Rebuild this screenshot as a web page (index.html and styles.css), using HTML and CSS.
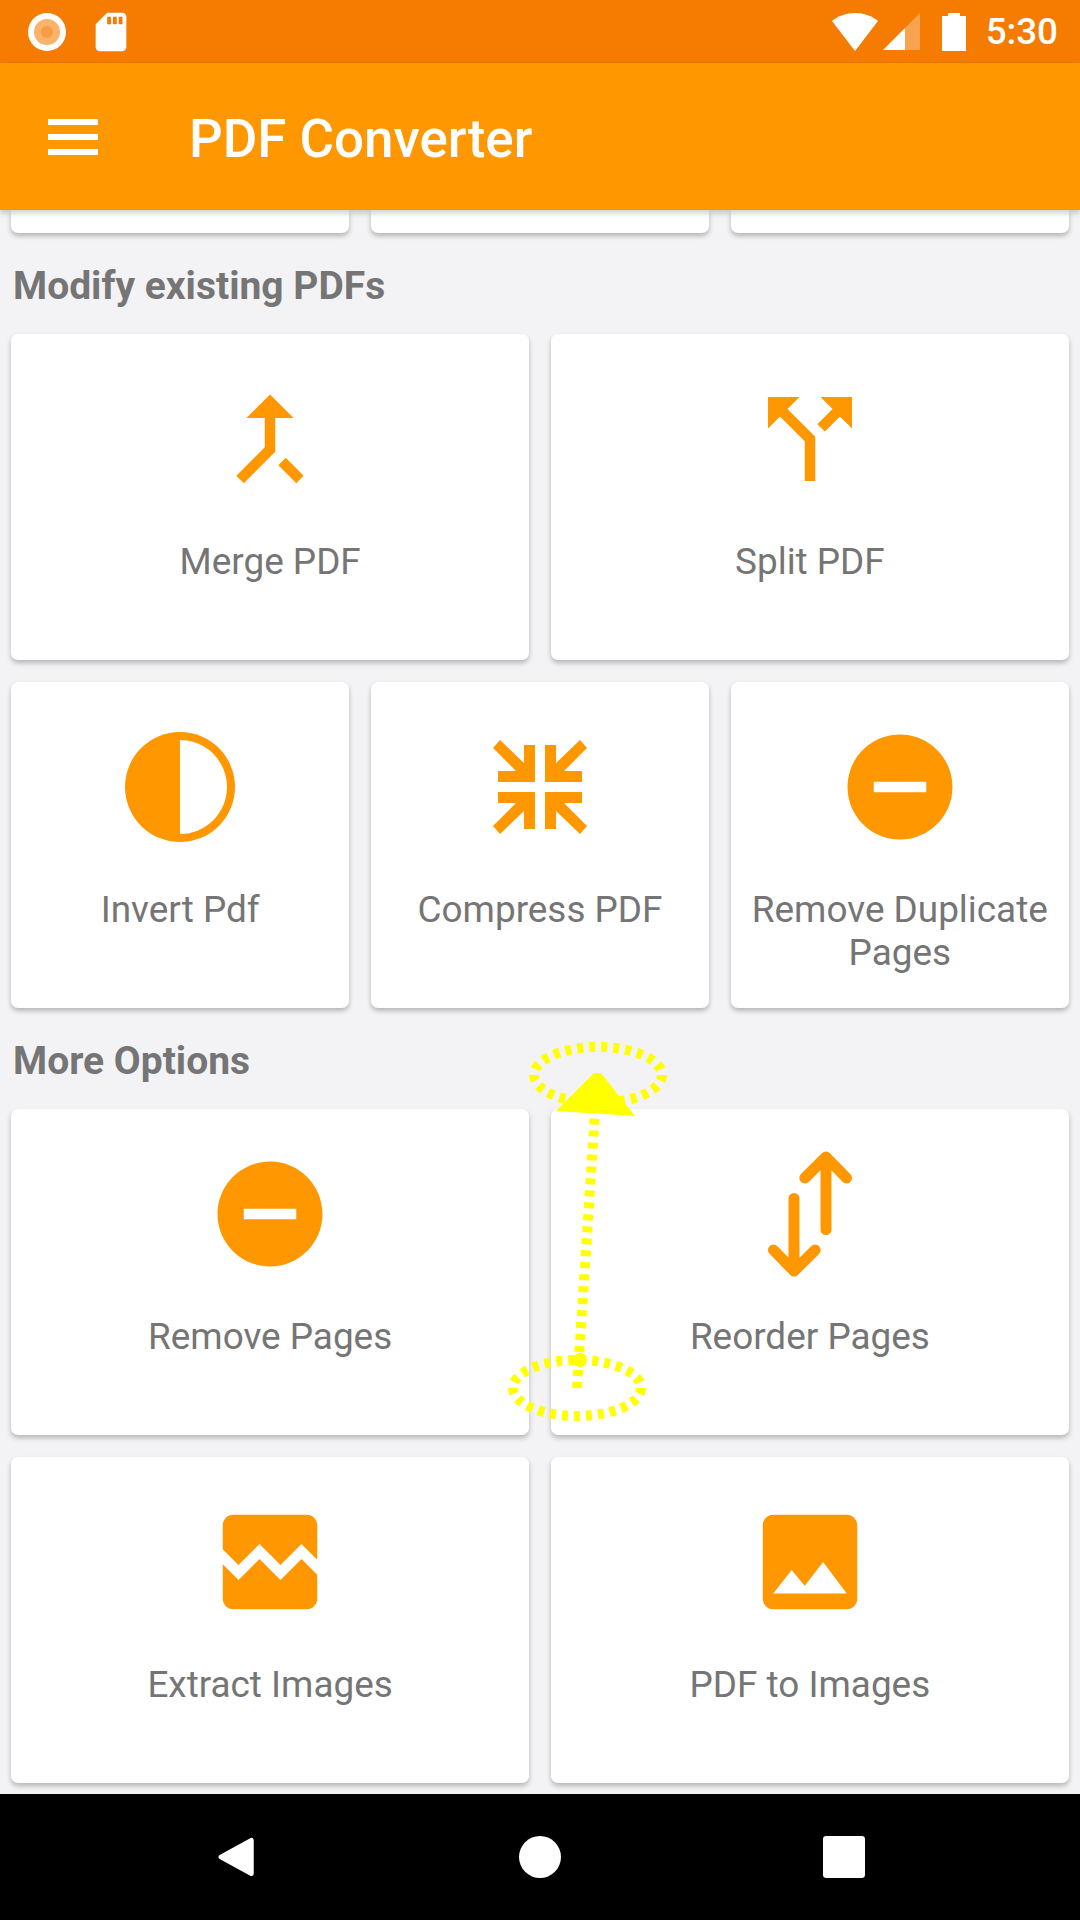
FILE: index.html
```html
<!DOCTYPE html>
<html>
<head>
  <title>PDF Converter</title>
  <link rel="stylesheet" href="styles.css">
</head>
<body>
  <div class="screen">
    <div class="status-bar">
      <svg class="rec-icon" viewBox="0 0 38 38">
        <circle cx="19" cy="19" r="19" fill="#fff"/>
        <circle cx="19" cy="19" r="13" fill="#fbb36c"/>
        <circle cx="19" cy="19" r="6" fill="#f99c42"/>
      </svg>
      <svg class="sd-icon" viewBox="0 0 24 24">
        <path fill="#fff" d="M18 2h-8L4.02 8 4 20c0 1.1.9 2 2 2h12c1.1 0 2-.9 2-2V4c0-1.1-.9-2-2-2zm-6 6h-2V4h2v4zm3 0h-2V4h2v4zm3 0h-2V4h2v4z"/>
      </svg>
      <div class="status-right">
        <svg class="wifi-icon" viewBox="0 0 46 38">
          <path fill="#fff" d="M23 38L0 8C6 3 14 0 23 0s17 3 23 8z"/>
        </svg>
        <svg class="signal-icon" viewBox="0 0 37 37">
          <path fill="#fff" fill-opacity=".3" d="M22 15L37 0v37H22z"/>
          <path fill="#fff" d="M0 37l22-22v22z"/>
        </svg>
        <svg class="battery-icon" viewBox="0 0 24 38">
          <path fill="#fff" d="M6 0h12v3h6v35H0V3h6z"/>
        </svg>
        <span class="clock">5:30</span>
      </div>
    </div>

    <header class="app-bar">
      <svg class="menu-icon" viewBox="0 0 50 36">
        <path fill="#fff" d="M0 0h50v6H0zM0 15h50v6H0zM0 30h50v6H0z"/>
      </svg>
      <h1 class="app-title">PDF Converter</h1>
    </header>

    <main class="content">
      <div class="grid three stubs">
        <div class="card stub"></div>
        <div class="card stub"></div>
        <div class="card stub"></div>
      </div>

      <h2 class="section-title">Modify existing PDFs</h2>
      <div class="grid two">
        <div class="card">
          <svg class="card-icon" viewBox="0 0 24 24"><path d="M17 20.41L18.41 19 15 15.59 13.59 17 17 20.41zM7.5 8H11v5.59L5.59 19 7 20.41l6-6V8h3.5L12 3.5 7.5 8z"/></svg>
          <div class="card-label">Merge PDF</div>
        </div>
        <div class="card">
          <svg class="card-icon" viewBox="0 0 24 24"><path d="M14 4l2.29 2.29-2.88 2.88 1.42 1.42 2.88-2.88L20 10V4zm-4 0H4v6l2.29-2.29 4.71 4.7V20h2v-8.41l-5.29-5.3z"/></svg>
          <div class="card-label">Split PDF</div>
        </div>
      </div>
      <div class="grid three">
        <div class="card">
          <svg class="card-icon" viewBox="-63 -63 126 126">
            <circle r="55"/>
            <path fill="#fff" d="M0-47a47 47 0 0 1 0 94z"/>
          </svg>
          <div class="card-label">Invert Pdf</div>
        </div>
        <div class="card">
          <svg class="card-icon" viewBox="-63 -63 126 126">
            <path d="M-47-39l7-8 24 23v-18H-5V-5h-37v-11h18z"/>
            <path d="M47-39l-7-8-24 23v-18H5V-5h37v-11H24z"/>
            <path d="M-47 39l7 8 24-23v18H-5V5h-37v11h18z"/>
            <path d="M47 39l-7 8-24-23v18H5V5h37v11H24z"/>
          </svg>
          <div class="card-label">Compress PDF</div>
        </div>
        <div class="card">
          <svg class="card-icon" viewBox="0 0 24 24"><path d="M12 2C6.48 2 2 6.48 2 12s4.48 10 10 10 10-4.48 10-10S17.52 2 12 2zm5 11H7v-2h10v2z"/></svg>
          <div class="card-label">Remove Duplicate Pages</div>
        </div>
      </div>

      <h2 class="section-title">More Options</h2>
      <div class="grid two">
        <div class="card">
          <svg class="card-icon" viewBox="0 0 24 24"><path d="M12 2C6.48 2 2 6.48 2 12s4.48 10 10 10 10-4.48 10-10S17.52 2 12 2zm5 11H7v-2h10v2z"/></svg>
          <div class="card-label">Remove Pages</div>
        </div>
        <div class="card">
          <svg class="card-icon" viewBox="-63 -63 126 126">
            <path class="line-icon" d="M16 15.5V-57M-5.2-36L16-57 36.5-36M-16-15.5V57M-36.5 36L-16 57 5.2 36"/>
          </svg>
          <div class="card-label">Reorder Pages</div>
        </div>
      </div>
      <div class="grid two">
        <div class="card">
          <svg class="card-icon" viewBox="0 0 24 24"><path d="M21 5v6.59l-3-3.01-4 4.01-4-4-4 4-3-3.01V5c0-1.1.9-2 2-2h14c1.1 0 2 .9 2 2zm-3 6.42l3 3.01V19c0 1.1-.9 2-2 2H5c-1.1 0-2-.9-2-2v-6.58l3 2.99 4-4 4 4 4-3.99z"/></svg>
          <div class="card-label">Extract Images</div>
        </div>
        <div class="card">
          <svg class="card-icon" viewBox="0 0 24 24"><path d="M21 19V5c0-1.1-.9-2-2-2H5c-1.1 0-2 .9-2 2v14c0 1.1.9 2 2 2h14c1.1 0 2-.9 2-2zM8.5 13.5l2.5 3.01L14.5 12l4.5 6H5l3.5-4.5z"/></svg>
          <div class="card-label">PDF to Images</div>
        </div>
      </div>
    </main>

    <nav class="nav-bar">
      <div class="nav-item">
        <svg class="nav-icon" viewBox="0 0 40 44">
          <path fill="#fff" stroke="#fff" stroke-width="5" stroke-linejoin="round" d="M36 4.5v35L4 22z"/>
        </svg>
      </div>
      <div class="nav-item">
        <svg class="nav-icon" viewBox="0 0 42 42"><circle cx="21" cy="21" r="21" fill="#fff"/></svg>
      </div>
      <div class="nav-item">
        <svg class="nav-icon" viewBox="0 0 40 40"><rect width="40" height="40" rx="3" fill="#fff"/></svg>
      </div>
    </nav>

    <!-- swipe gesture drawn over the screen -->
    <svg class="gesture" viewBox="0 0 1080 1920">
      <ellipse class="dots" cx="598" cy="1075" rx="64" ry="28"/>
      <ellipse class="dots" cx="577" cy="1388" rx="64" ry="28"/>
      <path class="dots" d="M577 1388L595 1112"/>
      <path fill="#ff0" d="M594 1073h7l34 43-79-5z"/>
      <circle class="ring" cx="580" cy="1360" r="5"/>
    </svg>
  </div>
</body>
</html>
```

FILE: styles.css
```css
* {
  box-sizing: border-box;
}

body {
  margin: 0;
  font-family: Roboto, "Noto Sans", sans-serif;
  background-color: #f3f3f6;
}

.screen {
  position: relative;
  display: flex;
  flex-direction: column;
  width: 1080px;
  height: 1920px;
  overflow: hidden;
}

/* status bar */
.status-bar {
  display: flex;
  align-items: center;
  height: 63px;
  padding-left: 28px;
  background-color: #f57c00;
  flex-shrink: 0;
}

.rec-icon {
  width: 38px;
  height: 38px;
}

.sd-icon {
  width: 46px;
  height: 46px;
  margin-left: 22px;
}

.status-right {
  display: flex;
  align-items: center;
  margin-left: auto;
  padding-right: 22px;
}

.wifi-icon {
  width: 46px;
  height: 38px;
}

.signal-icon {
  width: 37px;
  height: 37px;
  margin-left: 5px;
}

.battery-icon {
  width: 24px;
  height: 38px;
  margin-left: 22px;
}

.clock {
  margin-left: 20px;
  font-size: 36.75px;
  font-weight: 500;
  line-height: 63px;
  color: #fff;
}

/* app bar */
.app-bar {
  position: relative;
  z-index: 2;
  display: flex;
  align-items: center;
  height: 147px;
  padding-left: 48px;
  background-color: #ff9800;
  box-shadow: 0 3px 6px rgba(0, 0, 0, 0.2);
  flex-shrink: 0;
}

.menu-icon {
  width: 50px;
  height: 36px;
}

.app-title {
  margin: 4px 0 0 91px;
  font-size: 52.9px;
  font-weight: 500;
  color: #fff;
}

/* cards */
.content {
  flex: 1;
  display: flex;
  flex-direction: column;
  gap: 22px;
  padding: 0 11px;
  overflow: hidden;
}

.grid {
  display: grid;
  gap: 21.5px;
}

.grid.two {
  grid-template-columns: repeat(2, 1fr);
}

.grid.three {
  grid-template-columns: repeat(3, 1fr);
}

.card {
  display: flex;
  flex-direction: column;
  align-items: center;
  height: 326px;
  padding: 42px 16px 0;
  background-color: #fff;
  border-radius: 7px;
  box-shadow: 0 3px 5px rgba(0, 0, 0, 0.25);
}

.card.stub {
  height: 23px;
  padding: 0;
  border-radius: 0 0 7px 7px;
}

.card-icon {
  width: 126px;
  height: 126px;
  fill: #ff9800;
  flex-shrink: 0;
}

.line-icon {
  fill: none;
  stroke: #ff9800;
  stroke-width: 11;
  stroke-linecap: round;
  stroke-linejoin: round;
}

.card-label {
  margin-top: 38px;
  font-size: 36.9px;
  line-height: 43px;
  text-align: center;
  color: #757575;
}

.section-title {
  height: 57px;
  margin: 0;
  padding: 9px 2px 0;
  font-size: 39px;
  font-weight: 700;
  line-height: 44px;
  color: #757575;
}

/* nav bar */
.nav-bar {
  display: flex;
  justify-content: center;
  align-items: center;
  height: 126px;
  background-color: #000;
  flex-shrink: 0;
}

.nav-item {
  display: flex;
  justify-content: center;
  width: 304px;
}

.nav-icon {
  display: block;
  height: 42px;
}

/* gesture overlay */
.gesture {
  position: absolute;
  top: 0;
  left: 0;
  z-index: 3;
  width: 1080px;
  height: 1920px;
  pointer-events: none;
}

.dots {
  fill: none;
  stroke: #ff0;
  stroke-width: 10;
  stroke-dasharray: 6 6;
}

.ring {
  fill: none;
  stroke: #ff0;
  stroke-width: 4;
}
```
